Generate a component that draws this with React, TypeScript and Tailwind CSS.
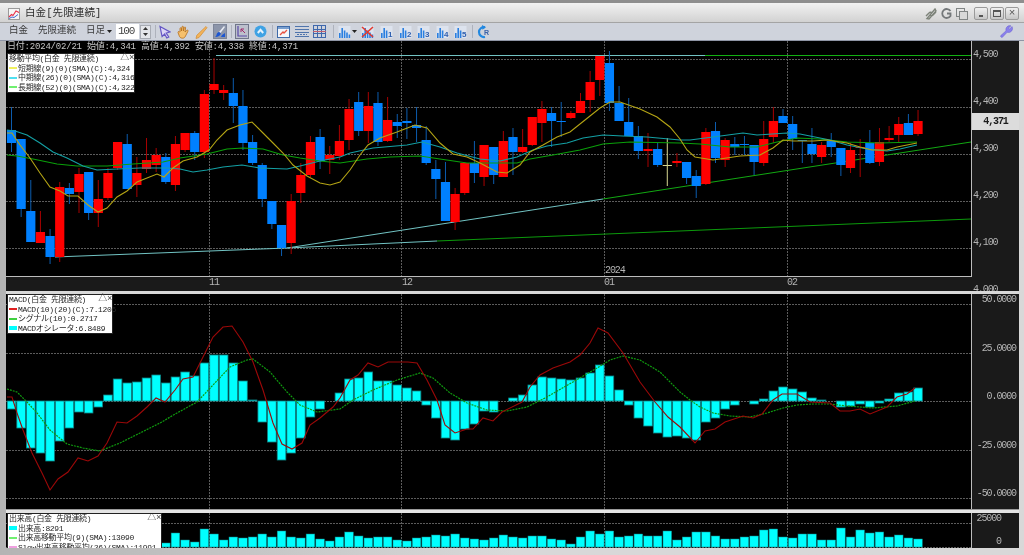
import React from 'react';

// [color, bodyTop, bodyBottom, wickTop, wickBottom]  page coordinates, one row per trading day
type Candle = ['r' | 'b' | 'y', number, number, number, number];

const candles: Candle[] = [
  ['b',130,143,107,152],['b',139,209,139,217],['b',211,242,180,242],['r',232,243,211,243],['b',236,257,229,264],
  ['r',187,257,182,262],['b',188,194,183,204],['r',174,192,168,213],['b',172,213,172,220],['r',199,213,180,227],
  ['r',173,198,168,200],['r',142,168,142,170],['b',144,189,134,189],['r',173,185,157,197],['r',160,169,138,173],
  ['r',155,165,148,172],['b',157,182,153,184],['r',144,185,136,191],['r',133,150,133,152],['b',133,152,131,160],
  ['r',94,152,90,158],['r',84,90,58,94],['r',90,93,85,100],['b',93,106,78,123],['b',106,143,90,150],
  ['b',142,163,135,165],['b',165,199,163,207],['b',201,224,201,229],['b',225,248,225,256],['r',201,243,194,254],
  ['r',175,193,163,203],['r',142,175,136,177],['b',137,161,129,169],['r',155,160,146,174],['r',141,156,125,160],
  ['r',109,140,99,150],['b',102,131,92,136],['r',106,131,92,143],['b',103,142,92,146],['r',120,141,97,142],
  ['b',122,126,114,138],['b',121,123,108,139],['b',125,128,107,142],['b',140,163,126,165],['b',169,179,160,199],
  ['b',182,221,162,221],['r',194,222,188,230],['r',163,193,162,195],['b',163,173,141,183],['r',145,177,145,186],
  ['b',147,175,147,184],['r',141,177,131,177],['b',137,152,128,175],['r',147,152,129,153],['r',117,145,117,146],
  ['r',109,123,101,142],['b',113,121,107,147],['b',121,122,102,137],['r',113,118,111,119],['r',101,113,93,113],
  ['r',82,100,71,112],['r',56,80,56,96],['b',63,103,51,111],['b',103,121,86,121],['b',122,136,98,136],
  ['b',136,151,126,159],['r',149,151,133,167],['b',149,165,142,167],['y',165,166,138,186],['r',161,163,153,167],
  ['b',162,178,162,184],['b',176,186,170,198],['r',132,184,128,185],['b',131,158,122,163],['r',140,160,138,167],
  ['b',144,147,137,155],['b',144,145,136,155],['b',145,162,145,175],['r',139,163,121,166],['r',121,137,107,143],
  ['b',116,123,109,123],['b',124,139,116,150],['b',140,141,140,163],['b',144,154,128,163],['r',145,157,142,163],
  ['b',141,147,133,157],['b',148,165,148,176],['r',150,168,143,173],['r',147,148,139,177],['b',143,163,130,164],
  ['r',142,162,128,166],['r',138,140,126,142],['r',124,135,117,143],['b',123,135,114,135],['r',121,134,110,136],
];

const shortMa = '7,133 12,133 20,145 30,158 40,173 50,187 60,191 68,196 78,196 88,205 98,212 107,208 117,197 127,191 137,182 147,178 157,174 164,177 173,168 183,161 197,157 209,150 217,140 227,130 240,125 252,122 263,133 273,143 283,153 293,165 307,176 320,183 330,185 340,182 350,170 360,155 368,145 380,138 397,132 415,125 427,128 440,143 453,154 467,157 480,163 497,172 507,173 520,165 530,152 543,145 557,137 570,132 590,116 600,108 610,102 620,102 640,109 657,117 670,127 680,139 687,150 695,157 713,160 740,156 760,155 773,148 783,140 793,141 813,141 827,140 847,143 860,147 872,150 887,150 897,147 917,143';
const midMa = '7,130 15,131 27,135 40,143 53,152 67,158 83,166 97,170 117,169 140,168 167,168 180,169 193,172 207,170 223,167 242,165 260,168 287,169 300,166 320,161 340,157 350,153 373,148 407,145 422,142 440,147 457,153 480,159 500,161 517,157 533,150 547,146 567,143 583,138 603,135 623,136 647,137 680,140 690,140 713,137 743,133 757,135 787,133 800,134 830,140 847,145 867,149 887,151 900,149 917,145';
const longMa = '7,155 17,156 33,159 57,164 77,166 107,166 133,164 163,162 180,158 207,154 227,149 243,148 263,149 283,155 300,158 320,161 340,163 367,159 390,157 420,156 440,159 467,163 517,163 530,159 553,155 580,150 603,144 630,142 680,143 700,144 730,147 757,147 777,142 797,138 820,139 847,142 880,143 917,142';

const macdLine = '7,397 12,397 17,413 23,430 32,453 42,473 50,490 58,479 68,472 78,458 88,461 98,456 107,443 117,422 127,423 137,416 147,407 156,398 165,402 175,390 183,379 193,377 203,357 213,337 223,327 232,326 243,342 253,362 263,390 273,423 282,444 292,449 302,443 310,425 320,418 333,407 340,398 350,380 358,375 368,363 378,367 388,362 408,362 417,363 427,380 437,400 445,425 455,433 467,429 473,429 483,418 493,421 502,412 522,402 530,387 540,375 553,368 570,362 580,355 590,343 598,328 608,333 623,353 640,382 655,402 668,417 680,427 695,443 705,431 715,429 725,422 743,416 753,418 762,414 773,400 782,394 797,394 810,402 830,403 840,411 850,411 860,409 870,414 887,407 897,397 907,394 915,388';
const signalLine = '7,389 17,392 27,402 37,413 50,430 67,444 83,448 100,451 120,443 140,433 160,423 177,413 197,402 213,385 230,367 247,360 253,359 270,372 287,392 300,405 317,412 340,409 353,400 373,390 397,380 420,373 433,378 450,393 467,403 487,410 507,411 527,407 547,397 573,382 597,368 610,360 623,356 640,360 660,372 680,392 690,400 700,407 713,413 730,416 750,417 767,413 783,408 797,405 813,404 830,404 847,406 873,408 897,406 915,401';

// top edge of each oscillator bar, the zero line is y=401
const oscillator = [409,428,448,453,461,441,428,412,413,407,395,379,383,382,378,375,383,377,372,376,363,355,355,363,381,400,422,442,460,453,438,417,409,401,393,379,378,372,381,381,385,388,391,405,418,438,440,429,424,411,412,401,398,395,385,377,378,379,380,378,373,365,376,390,405,418,426,433,437,436,438,440,422,418,409,405,401,404,399,391,387,389,392,398,400,401,407,406,404,407,403,399,393,392,388];

// starts at day 16, the legend hides the earlier ones
const volume = [543,533,540,542,529,534,540,537,538,537,534,537,531,537,538,534,539,541,537,532,536,538,537,537,540,541,538,537,535,536,534,538,539,540,538,535,537,538,536,536,539,540,544,537,531,534,531,537,536,534,536,536,531,540,537,532,532,536,539,539,537,536,530,529,537,538,534,534,540,540,528,537,530,533,532,537,535,538,539];

const dayX = (i: number) => 11.5 + 9.644 * i;
const gridX = [209.5, 401.5, 604.5, 787.5];

const GridLines = ({ ys, top, bottom }: { ys: number[]; top: number; bottom: number }) => (
  <g stroke="#5c5c5c" strokeWidth="1" strokeDasharray="2 1" shapeRendering="crispEdges">
    {ys.map((y) => <line key={y} x1="6" x2="971" y1={y + 0.5} y2={y + 0.5} />)}
    {gridX.map((x) => <line key={x} x1={x} x2={x} y1={top} y2={bottom} />)}
  </g>
);

const MainChart = () => (
  <svg className="block w-full h-full" viewBox="6 41 965 235">
    <GridLines ys={[59, 107, 154, 201, 248]} top={41} bottom={276} />
    <line x1="216" y1="55.5" x2="705" y2="55.5" stroke="#72c4c4" />
    <line x1="705" y1="55.5" x2="971" y2="55.5" stroke="#12b012" />
    <polyline points="55,257 287,248 603,199" fill="none" stroke="#72c4c4" />
    <line x1="603" y1="199" x2="971" y2="142" stroke="#12a812" />
    <polyline points="287,248 437,241" fill="none" stroke="#72c4c4" />
    <line x1="437" y1="241" x2="971" y2="219" stroke="#0c9a0c" />
    {candles.map(([c, t, b, wt, wb], i) => {
      const x = dayX(i);
      const wick = c === 'r' ? '#a80000' : c === 'b' ? '#0c5cae' : '#d8d890';
      const body = c === 'r' ? '#ff0000' : c === 'b' ? '#0080ff' : '#d8d890';
      return (
        <g key={i}>
          <line x1={x} x2={x} y1={wt} y2={wb} stroke={wick} />
          <rect x={x - 4.6} width="9.2" y={t} height={b - t} fill={body} />
        </g>
      );
    })}
    <polyline points={longMa} fill="none" stroke="#0aa00a" strokeWidth="1.1" />
    <polyline points={midMa} fill="none" stroke="#14a0a4" strokeWidth="1.1" />
    <polyline points={shortMa} fill="none" stroke="#b4a414" strokeWidth="1.1" />
  </svg>
);

const MacdChart = () => (
  <svg className="block w-full h-full" viewBox="6 294 965 215">
    <GridLines ys={[304, 353, 401, 450, 498]} top={294} bottom={509} />
    {oscillator.map((y, i) =>
      y === 401 ? null : (
        <rect key={i} x={dayX(i) - 4.3} width="8.6" y={Math.min(y, 401)} height={Math.abs(y - 401)} fill="#00ffff" stroke="#0c8486" strokeWidth="0.8" />
      ),
    )}
    <polyline points={signalLine} fill="none" stroke="#0f9a0f" strokeWidth="1.2" strokeDasharray="2 1" />
    <polyline points={macdLine} fill="none" stroke="#9c0808" strokeWidth="1.1" />
  </svg>
);

const VolumeChart = () => (
  <svg className="block w-full h-full" viewBox="6 513 965 35">
    <GridLines ys={[523, 547]} top={513} bottom={548} />
    {volume.map((y, i) => (
      <rect key={i} x={dayX(i + 16) - 4.3} width="8.6" y={y} height={547 - y} fill="#00ffff" stroke="#0c8486" strokeWidth="0.5" />
    ))}
  </svg>
);

type LegendRow = { text: string; color: string; thick?: boolean };

const Legend = ({ title, rows, className }: { title: string; rows: LegendRow[]; className: string }) => (
  <div className={`absolute left-[1px] top-0 bg-white border border-[#222] text-[8px] leading-[9.5px] tracking-[-0.35px] text-[#262626] pl-[1px] ${className}`}>
    <div className="flex justify-between h-[9.5px] whitespace-nowrap">
      <span>{title}</span>
      <span className="text-[#444] text-[9px]">△×</span>
    </div>
    {rows.map((r) => (
      <div key={r.text} className="flex items-center h-[9.5px] whitespace-nowrap">
        <span className={`w-[8px] mr-[1px] shrink-0 ${r.thick ? 'h-[4px]' : 'h-[2px]'}`} style={{ backgroundColor: r.color }} />
        <span>{r.text}</span>
      </div>
    ))}
  </div>
);

const Bars = ({ n }: { n?: string }) => (
  <svg width="13" height="14" viewBox="0 0 13 14" className="shrink-0">
    <rect x="0.5" y="1" width="12" height="12" fill="#dde3ee" />
    <path d="M1 13V8h1.6v5zM3.4 13V3h1.6v10zM5.8 13V5.5h1.6V13z" fill="#2a7fe0" />
    {n ? (
      <text x="8" y="12" fontSize="8" fontWeight="700" fill="#3060b0" fontFamily="Liberation Sans">{n}</text>
    ) : (
      <path d="M8.2 13V7.5h1.6V13zM10.6 13V9.5h1.6V13z" fill="#2a7fe0" />
    )}
  </svg>
);

const Sep = ({ className }: { className: string }) => <span className={`w-[1px] h-[13px] bg-[#aeb2bc] shrink-0 ${className}`} />;

const Toolbar = () => (
  <div className="flex items-center h-[18px] shrink-0 bg-[#cfd3dc] border-b border-[#8f95a5] text-[9.5px] text-[#3a3a3a] pl-[9px]">
    <span>白金</span>
    <span className="ml-[10px]">先限連続</span>
    <span className="ml-[10px]">日足</span>
    <svg width="5" height="3" viewBox="0 0 5 3" className="ml-[2px]"><path d="M0 0h5L2.5 3z" fill="#222" /></svg>
    <span className="ml-[4px] w-[23px] h-[15px] bg-white text-[11px] leading-[15px] pl-[2px] tracking-[-1.3px] text-[#444]">100</span>
    <span className="ml-[1px] w-[11px] h-[14px] bg-[#e4e6ea] border border-[#a8acb4] flex flex-col items-center justify-center gap-[3px]">
      <svg width="5" height="3" viewBox="0 0 5 3"><path d="M2.5 0L5 3H0z" fill="#333" /></svg>
      <svg width="5" height="3" viewBox="0 0 5 3"><path d="M0 0h5L2.5 3z" fill="#333" /></svg>
    </span>
    <Sep className="ml-[4px]" />
    <svg width="12" height="14" viewBox="0 0 12 14" className="ml-[3px]">
      <path d="M1 1.5L11 7 7.2 8l2.6 4-2 1-2.2-4-2.5 2.6z" fill="#dcd6f6" stroke="#6456c4" strokeWidth="1.2" />
    </svg>
    <svg width="13" height="14" viewBox="0 0 13 14" className="ml-[6px]">
      <path d="M3 7V3.5c0-1 1.4-1 1.5 0V6l.4-4c.1-1 1.5-1 1.5 0v4l.8-3.400c.3-1 1.600-.7 1.400.3L8 7l1.900-1.700c.8-.6 1.700.3 1 1.100L8.500 11c-.7 1.500-1.500 2.200-3 2.200-2 0-3-1-3.500-3L1 7.500c-.2-1 1-1.300 1.400-.5z" fill="#f6c06c" stroke="#b46e1e" strokeWidth="0.8" />
    </svg>
    <svg width="13" height="14" viewBox="0 0 13 14" className="ml-[5px]">
      <path d="M11 1.500l1 1.200L4 12.500l-3 1 .8-3.200z" fill="#f4b45a" stroke="#d09040" strokeWidth="0.8" />
    </svg>
    <span className="ml-[5px] w-[14px] h-[15px] bg-[#8c95aa] border border-[#7c8498] flex items-center justify-center">
      <svg width="12" height="13" viewBox="0 0 12 13">
        <path d="M10 1l1 1-4.500 6L5 7z" fill="#e8ecf4" />
        <path d="M5 7l1.800 1.300C6.500 11 4 12 1 12c1.600-1 1.500-2.400 1.800-3.200C3.100 8 4 7.200 5 7z" fill="#1c56d2" />
        <path d="M8 10l3-2v4H7z" fill="#1c56d2" />
      </svg>
    </span>
    <Sep className="ml-[4px]" />
    <span className="ml-[3px] w-[14px] h-[15px] bg-[#bcc0cc] border border-[#70768a] flex items-center justify-center">
      <svg width="12" height="13" viewBox="0 0 12 13" fill="none">
        <path d="M2 1v10h9" stroke="#5a4aa8" strokeWidth="1.2" />
        <path d="M5 4l4 4M5 4h3M5 4v3" stroke="#a02a6a" />
      </svg>
    </span>
    <svg width="13" height="13" viewBox="0 0 13 13" className="ml-[5px]">
      <circle cx="6.500" cy="6.500" r="6" fill="#3fa2e4" />
      <path d="M3.800 8L6.500 4.800 9.200 8" fill="none" stroke="#e4f2fc" strokeWidth="2" />
    </svg>
    <Sep className="ml-[5px]" />
    <svg width="13" height="14" viewBox="0 0 13 14" className="ml-[4px]">
      <rect x="0.500" y="1.500" width="12" height="11" fill="#f4f6fa" stroke="#3e6aa8" />
      <rect x="1" y="2" width="11" height="2" fill="#7aa0d0" />
      <path d="M3 10l3-3 1 1 3-3" fill="none" stroke="#e85040" strokeWidth="1.300" />
    </svg>
    <svg width="14" height="13" viewBox="0 0 14 13" className="ml-[5px]" fill="none" stroke="#4f74ac">
      <path d="M0 1.500h14M0 4.500h14M0 7.500h14M0 11.500h14" />
      <path d="M2 9.500h10" strokeDasharray="2 1" />
    </svg>
    <svg width="13" height="13" viewBox="0 0 13 13" className="ml-[4px]" fill="none" stroke="#3f68ac">
      <path d="M0 .5h13M0 4.500h13M0 8.500h13M0 12.500h13M.5 0v13M4.500 0v13M8.500 0v13M12.500 0v13" />
      <path d="M0 6.500h13" stroke="#c06070" />
    </svg>
    <Sep className="ml-[7px]" />
    <span className="ml-[4px]"><Bars /></span>
    <svg width="5" height="3" viewBox="0 0 5 3" className="ml-[1px]"><path d="M0 0h5L2.500 3z" fill="#222" /></svg>
    <span className="ml-[4px] relative">
      <Bars />
      <svg width="13" height="14" viewBox="0 0 13 14" className="absolute inset-0">
        <path d="M1 2l11 10M12 2L1 12" stroke="#e23a2e" strokeWidth="1.600" />
      </svg>
    </span>
    <span className="ml-[6px]"><Bars n="1" /></span>
    <span className="ml-[6px]"><Bars n="2" /></span>
    <span className="ml-[5px]"><Bars n="3" /></span>
    <span className="ml-[6px]"><Bars n="4" /></span>
    <span className="ml-[5px]"><Bars n="5" /></span>
    <Sep className="ml-[5px]" />
    <svg width="14" height="14" viewBox="0 0 14 14" className="ml-[4px]">
      <path d="M8 2.200A5 5 0 1 0 8 12" fill="none" stroke="#2288e0" strokeWidth="2.200" />
      <path d="M5 0l4 2.200-3.600 2.600z" fill="#2288e0" />
      <text x="7" y="10" fontSize="7" fontWeight="700" fill="#3a62a8" fontFamily="Liberation Sans">R</text>
    </svg>
    <svg width="13" height="13" viewBox="0 0 13 13" className="ml-auto mr-[11px]">
      <path d="M12 1.500L9.500 4 8.500 3.200 11 .8A4 4 0 0 0 6 5.800L.8 10.500c-.8 1 .7 2.400 1.700 1.700L7.200 7.300A4 4 0 0 0 12 1.500z" fill="#8a80ec" stroke="#5a50c8" strokeWidth="0.400" />
    </svg>
  </div>
);

const WinButton = ({ children }: { children: React.ReactNode }) => (
  <span className="w-[14px] h-[13px] rounded-[2px] border border-[#9a9a9a] bg-gradient-to-b from-[#f0f0f0] to-[#c6c6c6] flex items-center justify-center">
    {children}
  </span>
);

const TitleBar = () => (
  <div className="flex items-center h-[20px] shrink-0 pt-[2px] bg-gradient-to-b from-[#f2f2f2] to-[#d2d2d2] border-b border-[#a4a4a4] pl-[8px] pr-[5px]">
    <svg width="12" height="12" viewBox="0 0 12 12">
      <rect x="0.500" y="0.500" width="11" height="11" fill="#f6f6f6" stroke="#9a9a9a" />
      <path d="M1 9l2.500-2.500L5 7.500 8 3l3 1.500" fill="none" stroke="#e8304a" strokeWidth="1.100" />
      <path d="M1 10.500l3-1.500 2 .5 4-3" fill="none" stroke="#4068d0" />
    </svg>
    <span className="ml-[5px] text-[10.500px] text-[#2c2c2c] tracking-[0.1px]">白金[先限連続]</span>
    <svg width="12" height="12" viewBox="0 0 12 12" className="ml-auto" fill="none" stroke="#7c8278" strokeWidth="1.400">
      <path d="M1 8l3-3a2 2 0 0 1 3 0M11 4L8 7a2 2 0 0 1-3 0M2 10.500l2 .5 7-8-1-2z" />
    </svg>
    <svg width="11" height="11" viewBox="0 0 11 11" className="ml-[4px]" fill="none" stroke="#74787a" strokeWidth="1.800">
      <path d="M9.500 3A4.500 4.500 0 1 0 9.500 8V5.500H6" />
    </svg>
    <svg width="12" height="12" viewBox="0 0 12 12" className="ml-[4px]" fill="none" stroke="#808484">
      <rect x="0.500" y="0.500" width="8" height="8" />
      <rect x="3.500" y="3.500" width="8" height="8" fill="#d8d8d8" />
    </svg>
    <span className="ml-[6px] flex gap-[1.500px]">
      <WinButton><span className="w-[4px] h-[2px] bg-[#555] mt-[5px]" /></WinButton>
      <WinButton><span className="w-[8px] h-[7px] border border-[#555] border-t-2" /></WinButton>
      <WinButton><span className="text-[11px] leading-none text-[#555]">×</span></WinButton>
    </span>
  </div>
);

const App: React.FC = () => {
  return (
    <div className="w-[1024px] h-[555px] overflow-hidden flex flex-col bg-[#d4d4d4] blur-[0.3px] font-['Liberation_Mono','Noto_Sans_CJK_JP',monospace]">
      <div className="h-[3px] shrink-0 bg-[#8e8e8e]" />
      <TitleBar />
      <Toolbar />
      <div className="flex-1 flex flex-col min-h-0 pl-[6px] pr-[5px] bg-gradient-to-r from-[#b4b4b4] via-[#d8d8d8] to-[#d8d8d8]">
        {/* price pane */}
        <div className="flex h-[250px] shrink-0 bg-[#1a1a1a]">
          <div className="w-[966px] flex flex-col">
            <div className="relative h-[236px] bg-black border-r border-b border-[#bcbcbc]">
              <MainChart />
              <div className="absolute left-[1px] top-[1px] text-[9px] leading-[11px] tracking-[-0.2px] text-[#c4c4c4] whitespace-nowrap">
                日付:2024/02/21 始値:4,341 高値:4,392 安値:4,338 終値:4,371
              </div>
              <div className="absolute left-0 top-[12px]">
                <Legend
                  title="移動平均(白金 先限連続)"
                  className="w-[128px]"
                  rows={[
                    { text: '短期線(9)(0)(SMA)(C):4,324', color: '#f0f060' },
                    { text: '中期線(26)(0)(SMA)(C):4,316', color: '#50e0f0' },
                    { text: '長期線(52)(0)(SMA)(C):4,322', color: '#70f070' },
                  ]}
                />
              </div>
              <span className="absolute left-[599px] top-[224px] text-[10px] leading-[12px] tracking-[-1.100px] text-[#b4b4b4]">2024</span>
            </div>
            <div className="flex h-[14px] text-[10px] leading-[12px] tracking-[-1.100px] text-[#b4b4b4]">
              <span className="ml-[203px] w-[10px]">11</span>
              <span className="ml-[183px] w-[10px]">12</span>
              <span className="ml-[192px] w-[10px]">01</span>
              <span className="ml-[173px] w-[10px]">02</span>
            </div>
          </div>
          <div className="relative flex-1 flex flex-col gap-[35px] pt-[8px] pl-[1px] text-[10px] leading-[12px] tracking-[-1.100px] text-[#b4b4b4] overflow-hidden">
            <span>4,500</span>
            <span>4,400</span>
            <span>4,300</span>
            <span>4,200</span>
            <span>4,100</span>
            <span>4,000</span>
            <span className="absolute left-0 top-[72px] w-[47px] h-[17px] bg-[#dcdcdc] text-center text-[10px] font-bold leading-[17px] text-[#1c1c1c]">4,371</span>
          </div>
        </div>
        <div className="h-[3px] shrink-0 bg-[#d8d8d8]" />
        {/* MACD pane */}
        <div className="flex h-[215px] shrink-0 bg-[#1a1a1a]">
          <div className="relative w-[966px] bg-black border-r border-[#bcbcbc]">
            <MacdChart />
            <Legend
              title="MACD(白金 先限連続)"
              className="w-[106px]"
              rows={[
                { text: 'MACD(10)(20)(C):7.1206', color: '#e02020' },
                { text: 'シグナル(10):0.2717', color: '#40d040' },
                { text: 'MACDオシレータ:6.8489', color: '#00ffff', thick: true },
              ]}
            />
          </div>
          <div className="flex-1 flex flex-col items-end gap-[38.500px] pt-[1px] pr-[3px] text-[10px] leading-[10px] tracking-[-1.100px] text-[#b4b4b4]">
            <span>50.0000</span>
            <span>25.0000</span>
            <span>0.0000</span>
            <span>-25.0000</span>
            <span>-50.0000</span>
          </div>
        </div>
        <div className="h-[4px] shrink-0 bg-[#e4e4e4] border-t border-[#9a9a9a]" />
        {/* volume pane */}
        <div className="flex h-[35px] shrink-0 bg-[#1a1a1a] overflow-hidden">
          <div className="relative w-[966px] bg-black border-r border-[#bcbcbc]">
            <VolumeChart />
            <Legend
              title="出来高(白金 先限連続)"
              className="w-[155px] h-[38px] overflow-hidden"
              rows={[
                { text: '出来高:8291', color: '#00ffff', thick: true },
                { text: '出来高移動平均(9)(SMA):13090', color: '#70f070' },
                { text: 'Slow出来高移動平均(26)(SMA):11991', color: '#f0a0e0' },
              ]}
            />
          </div>
          <div className="flex-1 flex flex-col items-end gap-[13px] pt-[1px] pr-[18px] text-[10px] leading-[10px] tracking-[-1.100px] text-[#b4b4b4]">
            <span>25000</span>
            <span>0</span>
          </div>
        </div>
      </div>
    </div>
  );
};

export default App;
